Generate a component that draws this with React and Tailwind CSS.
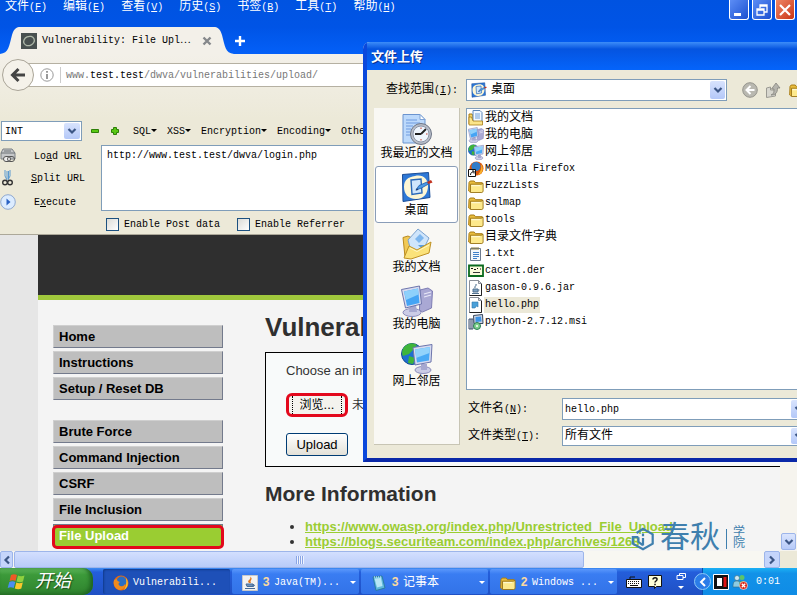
import React from "react";

const MONO = "[font-family:'Liberation_Mono','Noto_Sans_CJK_SC',monospace]";
const SANS = "[font-family:'Liberation_Sans','Noto_Sans_CJK_SC',sans-serif]";

function Zh({ children }) {
  return <span className="text-[12px]">{children}</span>;
}

/* ---------- icons ---------- */

function Folder({ className }) {
  return (
    <svg viewBox="0 0 16 16" className={className} aria-hidden="true">
      <path d="M1 4.5 2.2 3h4l1.3 1.7h6.8v9H1.5L.7 13z" fill="#e9bd3d" stroke="#a87c14" strokeWidth="1" />
      <path d="M2.5 6.2h10.8l1.8-.8v8.2l-1.3.9H2.5z" fill="#fde98c" stroke="#9a7417" strokeWidth=".9" />
      <path d="M3.3 7h9v1.2h-9z" fill="#fff8cf" />
    </svg>
  );
}

function RecentDocs({ className }) {
  return (
    <svg viewBox="0 0 32 32" className={className} aria-hidden="true">
      <path d="M2 .500h17l5 5V29H2z" fill="#bcd9fb" stroke="#6b94cf" />
      <path d="M19 .500v5h5z" fill="#fff" stroke="#7fa3d6" />
      <path d="M5 6h11M5 9h14M5 12h7M5 15h5M5 18h4M5 21h4" stroke="#6f9be0" strokeWidth="1.2" />
      <circle cx="20" cy="20" r="10.5" fill="#b9bec8" stroke="#6e7686" />
      <circle cx="20" cy="20" r="8" fill="#eef5fd" stroke="#8c96a8" />
      <path d="m20 20 5-5M20 20h-6" stroke="#222" strokeWidth="1.8" />
      <path d="M20 13.5v1.5M20 25v1.5M26.5 20H25" stroke="#c0392b" />
    </svg>
  );
}

function DesktopIcon({ className }) {
  return (
    <svg viewBox="0 0 32 32" className={className} aria-hidden="true">
      <path d="m1.500 3.500 26-2 1.500 25-27 4z" fill="#2e78d6" stroke="#1b4d96" />
      <path d="M14 5c8-2 13 3 13 10s-4 13-12 13S3 23 3 16 7 6 14 5z" fill="#fdf6d4" />
      <path d="m10 9 10-1 1 14-10 1.500z" fill="#cfe6fc" stroke="#2867b8" strokeWidth="1.4" />
      <path d="m15 19 3-4.500 8-3.500 1.500 2-7 4z" fill="#4a9ae6" stroke="#1f5ba8" strokeWidth=".8" />
      <path d="m26 11 4-2 1.500 2.500-4 1.500z" fill="#c2321f" />
      <path d="m14.500 19.500 3-.5-1.500-2z" fill="#173f7a" />
    </svg>
  );
}

function MyDocs({ className }) {
  return (
    <svg viewBox="0 0 32 32" className={className} aria-hidden="true">
      <path d="M2 9.500 7 8l4 2 1 12-8 7z" fill="#f1c955" stroke="#b88a20" />
      <path d="m7 12 10-11 11 9-7 14-11-1z" fill="#cfe5fb" stroke="#7ba2cf" />
      <path d="m14 11 5-5 4 4-5 5z" fill="#7db6ee" />
      <path d="M17 17h8l-4 4z" fill="#5d9fe0" />
      <path d="m3 30 5-12 8 4 14-8-2 11-18 6z" fill="#fbe27a" stroke="#bf9123" />
      <path d="m9 20 7 3.500L28 17" stroke="#fff6c4" fill="none" />
    </svg>
  );
}

function Monitor({ className }) {
  return (
    <svg viewBox="0 0 32 32" className={className} aria-hidden="true">
      <path d="m19 5 8-2 4.500 3-1 17-9 4-3-2z" fill="#a9a8d4" stroke="#7f7eb4" />
      <path d="m23 9 7-2M23 12l7-2" stroke="#e9e9f8" strokeWidth="1.2" />
      <ellipse cx="11" cy="27.500" rx="9" ry="4" fill="#cbcce6" stroke="#8a8bbb" />
      <path d="M9 20h6l1 7H8z" fill="#a6a8d0" />
      <path d="m.5 4.500 18-3.500 2 18-16 4z" fill="#d7dbf0" stroke="#6d75ac" />
      <path d="m3 6.500 14-3 1.500 14.500L6 21z" fill="#45a4f4" />
      <path d="m3 6.500 14-3 .5 6L5 15z" fill="#8ed0fb" />
    </svg>
  );
}

function Network({ className }) {
  return (
    <svg viewBox="0 0 32 32" className={className} aria-hidden="true">
      <circle cx="11" cy="12" r="10.500" fill="#1e6fd0" stroke="#124a92" />
      <path d="M4 4c5-4 9-3 12-1l-4 5-4 4-6 2C0 10 2 6 4 4zM8 14l6 2-2 6-5-1z" fill="#3fb53a" />
      <ellipse cx="22" cy="28" rx="8" ry="3.500" fill="#cbcce6" stroke="#8a8bbb" />
      <path d="M20 22h6v6h-6z" fill="#a6a8d0" />
      <path d="m12 5.500 19-3-1 17.500-16 3z" fill="#d7dbf0" stroke="#6d75ac" />
      <path d="m14 7.500 15-2.500-1 13.500-12 2z" fill="#4aaaf5" />
      <path d="m14 7.500 15-2.500-.5 6L15 16z" fill="#93d3fb" />
    </svg>
  );
}

function Firefox({ className }) {
  return (
    <svg viewBox="0 0 16 16" className={className} aria-hidden="true">
      <circle cx="8" cy="8" r="7.500" fill="#e66a12" />
      <circle cx="8.500" cy="6.500" r="5" fill="#2a6fc4" />
      <path d="M1 5c1 0 2-1 3-1 0 2 1 2 3 3-2 1-2 3 0 4s4 0 5-2c1 3-1 5-5 6C2 14 0 10 1 5z" fill="#f08a1c" />
      <path d="M13 3c3 4 2 10-2 12 2-4 3-7 2-12z" fill="#f7c331" />
    </svg>
  );
}

function FirefoxShortcut({ className }) {
  return (
    <svg viewBox="0 0 16 16" className={className} aria-hidden="true">
      <circle cx="8.500" cy="7.500" r="7" fill="#d9570f" />
      <circle cx="8" cy="5.500" r="4.500" fill="#2f7dcb" />
      <path d="M13 3c3 4 2 10-3 11 2-3 4-6 3-11z" fill="#f7b52b" />
      <path d="M.5 8.500h7v7h-7z" fill="#fff" stroke="#111" />
      <path d="M2.500 14c0-2 1-3 3-3M4 10h2v2.500" stroke="#111" fill="none" />
    </svg>
  );
}

function DocsSmall({ className }) {
  return (
    <svg viewBox="0 0 16 16" className={className} aria-hidden="true">
      <path d="M1 4h3l1 2v8H1z" fill="#f3d264" stroke="#a87c14" />
      <path d="M5 .500h7l2 2v10H5z" fill="#f2f8ff" stroke="#5b86b8" />
      <path d="M7 4h5M7 6h5M7 8h5" stroke="#6fa0d8" />
      <path d="M1 15V7h2.500L5 11h9.500v4z" fill="#fbe58a" stroke="#a87c14" strokeWidth=".8" />
    </svg>
  );
}

function TextFile({ className }) {
  return (
    <svg viewBox="0 0 16 16" className={className} aria-hidden="true">
      <path d="M2.500 2.500h10v12h-10z" fill="#f4f7fb" stroke="#6d7b8e" />
      <path d="M4 1v3M6 1v3M8 1v3M10 1v3" stroke="#8d7d3c" />
      <path d="M5 6.500h6M5 8.500h6M5 10.500h6M5 12.500h4" stroke="#3f7fc9" />
    </svg>
  );
}

function Certificate({ className }) {
  return (
    <svg viewBox="0 0 16 16" className={className} aria-hidden="true">
      <path d="M1 2.500h14v10.500H1z" fill="#fbfbdc" stroke="#0b6a1e" strokeWidth="1.800" />
      <path d="M3 5.500h2M6 6.500h2M9 5.500h1M12 6h1" stroke="#111" strokeWidth="1.200" />
      <path d="M5 9.500h7" stroke="#3a3a3a" />
    </svg>
  );
}

function FileIcon({ className, jar }) {
  return (
    <svg viewBox="0 0 16 16" className={className} aria-hidden="true">
      <path d="M1.500.5h9l3 3v12h-12z" fill="#fff" stroke="#8a8f98" />
      <path d="M13.500 3.500v12h-12" fill="none" stroke="#222" />
      <path d="M10.500.5v3h3z" fill="#ddd" stroke="#8a8f98" />
      {jar ? (
        <path d="M5 9h5v3H5zM10 10h1.500M7 8c-1-2 2-2 1-4M4 13.500h7" fill="#7da2c4" stroke="#51718f" />
      ) : (
        <path d="M4 5h6v5l-1.500-1L7 11H4z" fill="#4aa0d8" stroke="#2f7ab0" strokeWidth=".6" />
      )}
    </svg>
  );
}

function Installer({ className }) {
  return (
    <svg viewBox="0 0 16 16" className={className} aria-hidden="true">
      <path d="M5.500 1.500 14.500.5l.5 9H6z" fill="#cfd6e4" stroke="#38475e" />
      <path d="M7.500 3 13 2.500l.5 5-6 .5z" fill="#3d93e6" />
      <path d="M1 5h4v10H1z" fill="#dfe5ee" stroke="#40506b" />
      <path d="M3 5v10" stroke="#40506b" />
      <circle cx="9" cy="12" r="3.500" fill="#7fd08b" stroke="#2a7c55" />
      <circle cx="9" cy="12" r="1" fill="#fff" />
    </svg>
  );
}

function Java({ className }) {
  return (
    <svg viewBox="0 0 16 16" className={className} aria-hidden="true">
      <path d="M.5.500h15v15H.5z" fill="#f2f2f2" stroke="#c9c9c9" />
      <path d="M7 8C4 5 10 5 8 1.500 12 4 7 5.500 9 8z" fill="#e2761b" />
      <path d="M4 9h7v2.500H5zM11 9.500c2 0 2 2-.5 2M3 13.500h10" fill="#6f93bb" stroke="#466b97" />
    </svg>
  );
}

function Notepad({ className }) {
  return (
    <svg viewBox="0 0 16 16" className={className} aria-hidden="true">
      <path d="m2 2 9-1 3 12-9 2.500z" fill="#5fb9dc" stroke="#2b7ba3" />
      <path d="M3.500 3.500 10 3l1.500 8L6 12.500z" fill="#b5e6f6" />
      <path d="M3 2h8" stroke="#e8f6fb" strokeDasharray="1 1" />
    </svg>
  );
}

function Chevron({ className }) {
  return (
    <svg viewBox="0 0 10 8" className={className} aria-hidden="true">
      <path d="m1.500 2 3.500 3.500L8.500 2" fill="none" stroke="#3c5685" strokeWidth="2.200" />
    </svg>
  );
}

function Arrow({ className }) {
  return (
    <span className={`flex shrink-0 items-center justify-center rounded-[2px] bg-linear-to-b from-[#d8e3fd] to-[#b4c8f8] pointer-events-none ${className}`}>
      <Chevron className="h-2 w-2.5" />
    </span>
  );
}

function Caret({ className }) {
  return (
    <svg viewBox="0 0 6 4" className={className} aria-hidden="true">
      <path d="M0 0h6L3 3z" fill="currentColor" />
    </svg>
  );
}

/* ---------- browser chrome ---------- */

const menus = [
  ["文件", "F"], ["编辑", "E"], ["查看", "V"], ["历史", "S"], ["书签", "B"], ["工具", "T"], ["帮助", "H"],
];

function TitleArea() {
  return (
    <header className="flex flex-col bg-linear-to-b from-[#0053e1] via-[#0054e6] to-[#0460f8]">
      <div className="flex h-[27px] items-start justify-between">
        <nav className="flex gap-4 pl-[5px] text-white">
          {menus.map(([name, key]) => (
            <button key={key} className="flex h-[14px] items-center whitespace-nowrap text-[10px]">
              <Zh>{name}</Zh>(<u>{key}</u>)
            </button>
          ))}
        </nav>
        <div className="flex gap-[3px] pr-[2px]">
          <button aria-label="最小化" className="h-5 w-5 rounded-b-[3px] border border-t-0 border-white bg-linear-to-br from-[#5c8df5] to-[#1c4fd0]">
            <svg viewBox="0 0 18 18" className="h-[18px] w-[18px]"><path d="M4 12h7v3H4z" fill="#fff" /></svg>
          </button>
          <button aria-label="还原" className="h-5 w-5 rounded-b-[3px] border border-t-0 border-white bg-linear-to-br from-[#5c8df5] to-[#1c4fd0]">
            <svg viewBox="0 0 18 18" className="h-[18px] w-[18px]"><path d="M7 7V4h7v7h-3M4 8h7v6H4zM4 9h7M7 5h7" fill="none" stroke="#fff" strokeWidth="1.300" /></svg>
          </button>
          <button aria-label="关闭" className="h-5 w-5 rounded-b-[3px] border border-t-0 border-white bg-linear-to-br from-[#ee8564] to-[#c9320f]">
            <svg viewBox="0 0 18 18" className="h-[18px] w-[18px]"><path d="m4 4 10 10M14 4 4 14" stroke="#fff" strokeWidth="2.200" /></svg>
          </button>
        </div>
      </div>
      <div className="flex h-[27px] items-stretch">
        <svg viewBox="0 0 20 27" className="h-[27px] w-5" aria-hidden="true">
          <path d="M0 27C9 26 9 19 12 8 14 1 17 0 20 0v27z" fill="#f3f0e9" />
        </svg>
        <div className="flex w-[194px] items-center bg-[#f3f0e9]">
          <svg viewBox="0 0 16 16" className="ml-px h-4 w-4" aria-hidden="true">
            <path d="M0 0h16v16H0z" fill="#48504f" />
            <ellipse cx="8" cy="8" rx="5.500" ry="4.500" fill="none" stroke="#aeb8a8" strokeWidth="1.300" transform="rotate(-25 8 8)" />
          </svg>
          <span className="ml-[5px] text-[10px] whitespace-nowrap text-black">Vulnerability: File Upl⋯</span>
          <button aria-label="关闭标签" className="mr-[2px] ml-auto">
            <svg viewBox="0 0 10 10" className="h-[10px] w-[10px]"><path d="m1.500 1.500 7 7M8.500 1.500l-7 7" stroke="#85888b" strokeWidth="2.400" /></svg>
          </button>
        </div>
        <svg viewBox="0 0 20 27" className="h-[27px] w-5" aria-hidden="true">
          <path d="M20 27C11 26 11 19 8 8 6 1 3 0 0 0v27z" fill="#f3f0e9" />
        </svg>
        <button aria-label="新标签" className="flex items-center">
          <svg viewBox="0 0 12 12" className="h-3 w-3"><path d="M6 1v10M1 6h10" stroke="#fff" strokeWidth="2.400" /></svg>
        </button>
      </div>
    </header>
  );
}

function AddressBar() {
  return (
    <div className="flex h-[65px] items-start bg-linear-to-b from-[#f3f0e9] to-[#ece9d8] pt-[5px]">
      <button aria-label="后退" className="z-10 ml-[2px] flex h-8 w-8 shrink-0 items-center justify-center rounded-full border border-[#aaa598] bg-[#f5f2ea]">
        <svg viewBox="0 0 16 16" className="h-4 w-4"><path d="M15 8H3M8.500 2 2.500 8l6 6" fill="none" stroke="#444" strokeWidth="3" /></svg>
      </button>
      <div className="mt-1 -ml-2 flex h-6 flex-1 items-center border-y border-[#b5b0a2] bg-white pl-[14px] text-[10px]">
        <svg viewBox="0 0 14 14" className="h-[14px] w-[14px] shrink-0" aria-hidden="true">
          <circle cx="7" cy="7" r="6.200" fill="none" stroke="#999" />
          <path d="M7 6v5M7 3v1.700" stroke="#888" strokeWidth="1.700" />
        </svg>
        <span className="mr-[5px] ml-[6px] h-4 w-px bg-[#ccc]" />
        <a href="#upload" className="text-[#777]">www.<b className="font-normal text-black">test.test</b>/dwva/vulnerabilities/upload/</a>
      </div>
    </div>
  );
}

function HackBar() {
  return (
    <section className="flex flex-col border-b border-[#aca899] bg-[#ece9d8] text-[10px] text-black">
      <div className="flex h-[26px] items-center pb-[2px]">
        <div className="ml-px flex h-5 w-[81px] items-center border border-[#7f9db9] bg-white pr-px">
          <select aria-label="类型" className="min-w-0 flex-1 appearance-none pl-[3px]"><option>INT</option></select>
          <Arrow className="h-4 w-4" />
        </div>
        <button aria-label="减少" className="ml-[9px]"><svg viewBox="0 0 8 8" className="h-2 w-2"><path d="M.5 2.500h7v3h-7z" fill="#59c814" stroke="#2d7f08" /></svg></button>
        <button aria-label="增加" className="ml-3"><svg viewBox="0 0 8 8" className="h-2 w-2"><path d="M2.500.500h3v2h2v3h-2v2h-3v-2h-2v-3h2z" fill="#59c814" stroke="#2d7f08" /></svg></button>
        <div className="ml-[14px] flex gap-[10px]">
          {["SQL", "XSS", "Encryption", "Encoding", "Other"].map((m) => (
            <button key={m} className="flex items-center">{m}<Caret className="h-1 w-[6px]" /></button>
          ))}
        </div>
      </div>
      <div className="flex h-[66px]">
        <div className="flex w-[101px] shrink-0 flex-col">
          <button className="flex h-[22px] shrink-0 items-center">
            <svg viewBox="0 0 16 16" className="h-4 w-4"><path d="M1 5 3 1h9l3 4v6H1z" fill="#c5c7c9" stroke="#7b8085" /><path d="M1 5h14M4 3h7" stroke="#6d7276" /><rect x="3.500" y="8.500" width="7" height="5" rx="2.500" fill="#eee" stroke="#555" /><rect x="7.500" y="8.500" width="7" height="5" rx="2.500" fill="none" stroke="#555" /></svg>
            <span className="w-[84px] text-center">Lo<u>a</u>d URL</span>
          </button>
          <button className="flex h-[22px] shrink-0 items-center">
            <svg viewBox="0 0 16 16" className="h-[18px] w-4"><path d="M5 0v6l2 4M10 0v6l-2 4M7 1v8M8.500 1v8" stroke="#5a9ad0" fill="none" /><circle cx="5" cy="12.500" r="2.300" fill="none" stroke="#333" strokeWidth="1.400" /><circle cx="10" cy="12.500" r="2.300" fill="none" stroke="#333" strokeWidth="1.400" /></svg>
            <span className="w-[84px] text-center"><u>S</u>plit URL</span>
          </button>
          <button className="flex h-[26px] shrink-0 items-center">
            <svg viewBox="0 0 16 16" className="h-4 w-4"><circle cx="8" cy="8" r="7.300" fill="#dcecff" stroke="#8fa9d0" /><path d="m6.500 4.500 4 3.500-4 3.500z" fill="#2a62c4" /></svg>
            <span className="w-[78px] text-center">E<u>x</u>ecute</span>
          </button>
        </div>
        <textarea aria-label="URL" className="flex-1 resize-none border border-[#7f9db9] bg-white px-[5px] py-[3px] leading-[13px]" defaultValue="http://www.test.test/dwva/login.php" />
      </div>
      <div className="flex h-[23px] items-center gap-[17px] pt-1 pl-[106px]">
        {["Enable Post data", "Enable Referrer"].map((t) => (
          <label key={t} className="flex items-center gap-[5px]">
            <input type="checkbox" className="h-[13px] w-[13px] appearance-none border border-[#1c5180] bg-linear-to-br from-[#dcdcd7] to-white" />
            {t}
          </label>
        ))}
      </div>
    </section>
  );
}

/* ---------- web page ---------- */

function NavItem({ children }) {
  return (
    <li>
      <a href="#nav" className="block h-[23px] border border-t-[#cfcfcf] border-r-[#737a8c] border-b-[#737a8c] border-l-[#cfcfcf] bg-[#bebebe] px-[5px] leading-[21px] font-bold text-black">
        {children}
      </a>
    </li>
  );
}

function WebPage() {
  return (
    <div className={`flex min-h-0 flex-1 overflow-hidden bg-[#e6e6e6] text-[13px] ${SANS}`}>
      <div className="ml-[38px] flex min-w-0 flex-1 flex-col bg-[#f4f4f4]">
        <div className="h-[65px] shrink-0 border-b-[5px] border-[#a0c83c] bg-[#2f2f2f]" />
        <div className="flex">
          <nav className="ml-[15px] w-[170px] shrink-0 pt-[25px]">
            <ul className="flex flex-col gap-[3px]">
              {["Home", "Instructions", "Setup / Reset DB"].map((t) => <NavItem key={t}>{t}</NavItem>)}
            </ul>
            <ul className="mt-5 flex flex-col gap-[3px]">
              {["Brute Force", "Command Injection", "CSRF", "File Inclusion"].map((t) => <NavItem key={t}>{t}</NavItem>)}
              <li className="relative">
                <a href="#upload" className="block h-[23px] border border-[#737a8c] bg-[#9acd32] px-[5px] leading-[21px] font-bold text-white">File Upload</a>
                <span className="pointer-events-none absolute -inset-x-px top-px -bottom-0.5 rounded-[5px] border-3 border-[#e3081c]" />
              </li>
            </ul>
          </nav>
          <main className="ml-[42px] min-w-0 flex-1 text-[#333]">
            <h1 className="mt-3 text-[26px] leading-[30px] font-bold whitespace-nowrap text-[#2f2f2f]">Vulnerability: File Upload</h1>
            <form className="mt-[10px] flex h-[115px] flex-col items-start border border-r-0 border-black bg-[#f8fafa] pl-5" onSubmit={(e) => e.preventDefault()}>
              <p className="mt-[9px] leading-[18px]">Choose an image to upload:</p>
              <div className="mt-[13px] flex items-center gap-1">
                <button type="button" className="h-6 w-[62px] rounded-[6px] border-3 border-[#e3081c] bg-[#f4f3ee] px-[3px] text-[13px] leading-[18px] text-black">
                  <span className="block border-x border-dotted border-black"><Zh>浏览</Zh>...</span>
                </button>
                <Zh>未选择文件。</Zh>
              </div>
              <button className="mt-4 h-[23px] w-[62px] rounded-[3px] border border-[#003c74] bg-linear-to-b from-white to-[#e3e1d8] leading-[20px] text-black">Upload</button>
            </form>
            <h2 className="mt-[15px] text-[21px] leading-[24px] font-bold text-[#2f2f2f]">More Information</h2>
            <ul className="mt-[13px] list-disc pl-10 leading-[15px] font-bold">
              <li><a href="https://www.owasp.org/index.php/Unrestricted_File_Upload" className="text-[#9acd32] underline">https://www.owasp.org/index.php/Unrestricted_File_Upload</a></li>
              <li><a href="https://blogs.securiteam.com/index.php/archives/1268" className="text-[#9acd32] underline">https://blogs.securiteam.com/index.php/archives/1268</a></li>
            </ul>
          </main>
        </div>
      </div>
      <div className="flex w-[17px] shrink-0 flex-col justify-end bg-[#f6f4ee] px-px pb-px">
        <button aria-label="向下滚动" className="flex h-[17px] items-center justify-center rounded-[2px] border border-[#9db5ea] bg-linear-to-b from-[#dbe5fd] to-[#b6caf8]">
          <Chevron className="h-2 w-2.5" />
        </button>
      </div>
    </div>
  );
}

function HScroll() {
  return (
    <div className="flex h-[17px] shrink-0 items-stretch bg-[#f8f7f2]">
      <button aria-label="向左滚动" className="flex w-[13px] items-center justify-center rounded-[2px] border border-[#9db5ea] bg-[#c5d5fb]">
        <Chevron className="h-2 w-2.5 rotate-90" />
      </button>
      <div className="ml-px flex flex-1">
        <div className="flex w-[76%] items-center justify-center gap-px rounded-[2px] border border-[#9db5ea] bg-linear-to-b from-[#d3dffe] to-[#b8cbf9]">
          {[0, 1, 2, 3].map((i) => <span key={i} className="h-2 w-px bg-[#8aa5e4] shadow-[1px_0_#eef3ff]" />)}
        </div>
      </div>
      <button aria-label="向右滚动" className="flex w-4 items-center justify-center rounded-[2px] border border-[#9db5ea] bg-[#c5d5fb]">
        <Chevron className="h-2 w-2.5 -rotate-90" />
      </button>
      <span className="w-[17px] bg-[#ece9d8]" />
    </div>
  );
}

/* ---------- file dialog ---------- */

const places = [
  ["我最近的文档", RecentDocs], ["桌面", DesktopIcon], ["我的文档", MyDocs], ["我的电脑", Monitor], ["网上邻居", Network],
];

const JarFile = (p) => <FileIcon {...p} jar />;

const files = [
  ["我的文档", DocsSmall, true],
  ["我的电脑", Monitor, true],
  ["网上邻居", Network, true],
  ["Mozilla Firefox", FirefoxShortcut],
  ["FuzzLists", Folder],
  ["sqlmap", Folder],
  ["tools", Folder],
  ["目录文件字典", Folder, true],
  ["1.txt", TextFile],
  ["cacert.der", Certificate],
  ["gason-0.9.6.jar", JarFile],
  ["hello.php", FileIcon],
  ["python-2.7.12.msi", Installer],
];

function UploadDialog() {
  return (
    <div className="absolute top-[42px] right-0 left-[363px] overflow-hidden rounded-tl-[7px]">
      <div role="dialog" aria-label="文件上传" className="flex w-[560px] flex-col border-b-4 border-l-4 border-b-[#0a28a8] border-l-[#0a48dc] bg-[#ece9d8] text-[10px] text-black">
        <div className="flex h-7 items-center bg-linear-to-b from-[#3c8cf8] via-[#0554e0] via-25% to-[#0464fb] pt-[3px] pl-1 text-[13px] font-bold text-white text-shadow-[1px_1px_#0a2f8a]">
          文件上传
        </div>
        <div className="flex h-[38px] items-center pt-[2px]">
          <label htmlFor="lookin" className="w-[99px] pl-[19px]"><Zh>查找范围</Zh>(<u>I</u>):</label>
          <div className="flex h-[22px] w-[261px] items-center gap-1 border border-[#7f9db9] bg-white pr-px pl-1">
            <DesktopIcon className="h-4 w-4" />
            <select id="lookin" className="h-5 flex-1 appearance-none text-[12px]"><option>桌面</option></select>
            <Arrow className="h-[18px] w-[15px]" />
          </div>
          <button aria-label="后退" className="ml-[15px]"><svg viewBox="0 0 16 16" className="h-4 w-4"><circle cx="8" cy="8" r="7.300" fill="#b9b8b0" stroke="#96958e" /><path d="M12.500 8H5M8.500 4 4.500 8l4 4" fill="none" stroke="#fff" strokeWidth="2" /></svg></button>
          <button aria-label="向上" className="ml-[7px]"><svg viewBox="0 0 16 16" className="h-4 w-4"><path d="m1.500 6 4-1v3h5v6l-9 1.500z" fill="#d8d7cf" stroke="#9b9a93" /><path d="M6 13c3-1 3-3 3-6H6.500L11 1l4 5h-2.500c0 5-2 7-6.500 7z" fill="#b5b4ad" stroke="#85847d" strokeWidth=".8" /></svg></button>
          <button aria-label="新建文件夹" className="ml-2"><Folder className="h-4 w-4" /></button>
        </div>
        <div className="flex pl-[7px]">
          <div className="mb-[13px] flex w-[86px] flex-col border-r border-b border-[#c8c5b4] bg-[#f9f8f4] pt-px">
            {places.map(([name, Icon]) => (
              <button key={name} className={`mx-px flex h-[57px] flex-col items-center rounded-[3px] border pt-1 ${name === "桌面" ? "border-[#8a9db8] bg-white" : "border-transparent"}`}>
                <Icon className="h-8 w-8" />
                <span className="text-[12px] leading-4 whitespace-nowrap">{name}</span>
              </button>
            ))}
          </div>
          <div className="ml-[6px] flex flex-1 flex-col pb-[11px]">
            <ul className="flex h-[282px] flex-col border border-[#7f9db9] bg-white pl-px">
              {files.map(([name, Icon, zh]) => (
                <li key={name} className="flex h-[17px] items-center">
                  <Icon className="h-4 w-4 shrink-0" />
                  <span className={`px-px ${zh ? "text-[12px] leading-[16px]" : "leading-[16px]"} ${name === "hello.php" ? "bg-[#ece9d8]" : ""}`}>{name}</span>
                </li>
              ))}
            </ul>
            <div className="mt-2 flex h-[22px] items-center pl-[2px]">
              <label htmlFor="fname" className="w-[94px]"><Zh>文件名</Zh>(<u>N</u>):</label>
              <div className="flex h-[22px] w-[247px] items-center border border-[#7f9db9] bg-white pr-px">
                <input id="fname" className="min-w-0 flex-1 px-[2px]" defaultValue="hello.php" />
                <Arrow className="h-[18px] w-4" />
              </div>
            </div>
            <div className="mt-[5px] flex h-[22px] items-center pl-[2px]">
              <label htmlFor="ftype" className="w-[94px]"><Zh>文件类型</Zh>(<u>T</u>):</label>
              <div className="flex h-5 w-[247px] items-center border border-[#7f9db9] bg-white pr-px">
                <select id="ftype" className="h-[18px] min-w-0 flex-1 appearance-none px-[2px] text-[12px]"><option>所有文件</option></select>
                <Arrow className="h-4 w-4" />
              </div>
            </div>
          </div>
        </div>
      </div>
    </div>
  );
}

/* ---------- taskbar ---------- */

function Task({ icon: Icon, count, label, zh, active }) {
  return (
    <button className={`flex h-[25px] w-[127px] items-center rounded-[2px] pt-[2px] pr-[3px] pl-[10px] text-[10px] text-white ${active ? "bg-[#1e50b8] shadow-[inset_1px_1px_2px_#103a8c]" : "bg-linear-to-b from-[#5a97fb] via-[#3a7df2] via-20% to-[#3273e8]"}`}>
      <Icon className="h-4 w-4 shrink-0" />
      <span className="ml-1 flex items-center whitespace-nowrap">
        {count && <b className="mr-1 w-2 text-[12px] text-[#f9d9a0]">{count}</b>}
        <span className={zh ? "text-[12px]" : ""}>{label}</span>
      </span>
      {!active && <Caret className="ml-auto h-1 w-[6px]" />}
    </button>
  );
}

function Taskbar() {
  return (
    <footer className="flex h-[27px] shrink-0 items-stretch bg-linear-to-b from-[#3f8cf3] via-[#245edb] via-15% to-[#1f50c4] text-white">
      <button className="flex w-[93px] shrink-0 items-center gap-2 rounded-r-[10px] bg-linear-to-b from-[#5fb75c] via-[#3c9a3a] via-25% to-[#2f832e] pl-[7px] shadow-[inset_-3px_-1px_4px_#1f6420]">
        <svg viewBox="0 0 20 20" className="h-5 w-5 shrink-0" aria-hidden="true">
          <path d="M4 3c2-1 4-1 6 0L8.500 9c-2-1-4-1-6 0z" fill="#ee5a26" />
          <path d="M11 3.500c2 1 4 1 6.500 0L16 9.500c-2 1-4 1-6.500 0z" fill="#8fd13f" />
          <path d="M2.300 10c2-1 4-1 6 0l-1.600 6c-2-1-4-1-6 0z" fill="#4b8df0" />
          <path d="M9.300 10.500c2 1 4 1 6.500 0l-1.500 6c-2 1-4 1-6.500 0z" fill="#fbc82c" />
        </svg>
        <span className="text-[18px] leading-[20px] whitespace-nowrap italic text-shadow-[1px_1px_1px_#1c4c1c]">开始</span>
      </button>
      <div className="ml-[10px] flex items-center gap-[2px]">
        <Task icon={Firefox} label="Vulnerabili..." active />
        <Task icon={Java} count="3" label="Java(TM)..." />
        <Task icon={Notepad} count="3" label="记事本" zh />
        <Task icon={Folder} count="2" label="Windows ..." />
      </div>
      <div className="ml-auto flex items-center gap-[6px] pr-[14px]">
        <svg viewBox="0 0 16 12" className="h-3 w-4" aria-label="键盘"><path d="M.5 3.500h15v8H.5z" fill="#fff" stroke="#111" /><path d="M2 5.500h12M2 7.500h12" stroke="#111" strokeDasharray="1 1" /><path d="M4 9.500h8M4 3V1h5" stroke="#111" fill="none" /></svg>
        <svg viewBox="0 0 14 14" className="h-[14px] w-[14px]" aria-label="帮助"><path d="M.5.500h13v11h-5l-2 2v-2h-6z" fill="#ffffd8" stroke="#111" /><path d="M5 4.500C5 2 9.500 2 9 4.500 9 6 7 6 7 7.500M7 8.800v1.500" fill="none" stroke="#111" strokeWidth="1.500" /></svg>
      </div>
      <svg viewBox="0 0 10 20" className="mr-2 h-5 w-[10px] self-center" aria-hidden="true"><path d="M3.500 3V1.500h6v4H7M1 3.500h6v4H1z" fill="none" stroke="#fff" /><path d="M2 14h6l-3 3z" fill="#fff" /></svg>
      <div className="ml-2 flex w-[95px] shrink-0 items-center border-l border-[#0a4fae] bg-linear-to-b from-[#1cb0f4] via-[#1292e8] via-20% to-[#0f8ce6]">
        <button aria-label="显示隐藏的图标" className="-ml-[9px] flex h-[17px] w-[17px] shrink-0 items-center justify-center rounded-full border border-[#8cc8f8] bg-[#2a7ce8]">
          <svg viewBox="0 0 8 10" className="h-[10px] w-2"><path d="M6 1 2 5l4 4" fill="none" stroke="#fff" strokeWidth="2" /></svg>
        </button>
        <svg viewBox="0 0 16 16" className="ml-[2px] h-4 w-4 shrink-0" aria-hidden="true"><path d="M.5.500h15v15H.5z" fill="#111" stroke="#fff" /><path d="M4 4h5v8H4z" fill="#fff" /><path d="M10.500 3h3v10h-3z" fill="#e01212" /></svg>
        <svg viewBox="0 0 16 16" className="ml-[3px] h-4 w-4 shrink-0" aria-hidden="true"><circle cx="5" cy="4" r="2.500" fill="#cde8f5" stroke="#3b6c7c" strokeWidth=".6" /><path d="M1 13c0-5 1-6 4-6s4 2 4 6z" fill="#8ccbe2" stroke="#3b6c7c" strokeWidth=".6" /><circle cx="10" cy="3.500" r="2.500" fill="#5cc46a" /><path d="M7 12c0-4 1-5 4-5s3 2 3 5z" fill="#3d9f57" /><circle cx="11.500" cy="11.500" r="4" fill="#d92b1c" stroke="#fff" strokeWidth=".6" /><path d="m9.800 9.800 3.400 3.400M13.200 9.800l-3.400 3.400" stroke="#fff" strokeWidth="1.300" /></svg>
        <time className="ml-2 text-[10px]">0:01</time>
      </div>
    </footer>
  );
}

function Watermark() {
  return (
    <div className="pointer-events-none absolute right-[51px] bottom-11 flex items-center text-[#3f7fae]">
      <svg viewBox="0 0 28 26" className="h-6 w-7" aria-hidden="true">
        <path d="M7 6.500 14 2l10.500 6v10L14 24 3 18v-7h6" fill="none" stroke="currentColor" strokeWidth="2.400" />
        <path d="M14 7v3M14 12v8M9 11v5l5 4" fill="none" stroke="currentColor" strokeWidth="2.400" />
      </svg>
      <span className="ml-[3px] text-[30px] leading-[24px]">春秋</span>
      <span className="mx-[6px] h-5 w-px bg-[#3f7fae]" />
      <span className="w-[13px] text-[12px] leading-[11px] break-all">学院</span>
    </div>
  );
}

export default function App() {
  return (
    <div className={`relative flex h-screen w-full flex-col overflow-hidden bg-[#ece9d8] ${MONO}`}>
      <TitleArea />
      <AddressBar />
      <HackBar />
      <WebPage />
      <HScroll />
      <UploadDialog />
      <Watermark />
      <Taskbar />
    </div>
  );
}
